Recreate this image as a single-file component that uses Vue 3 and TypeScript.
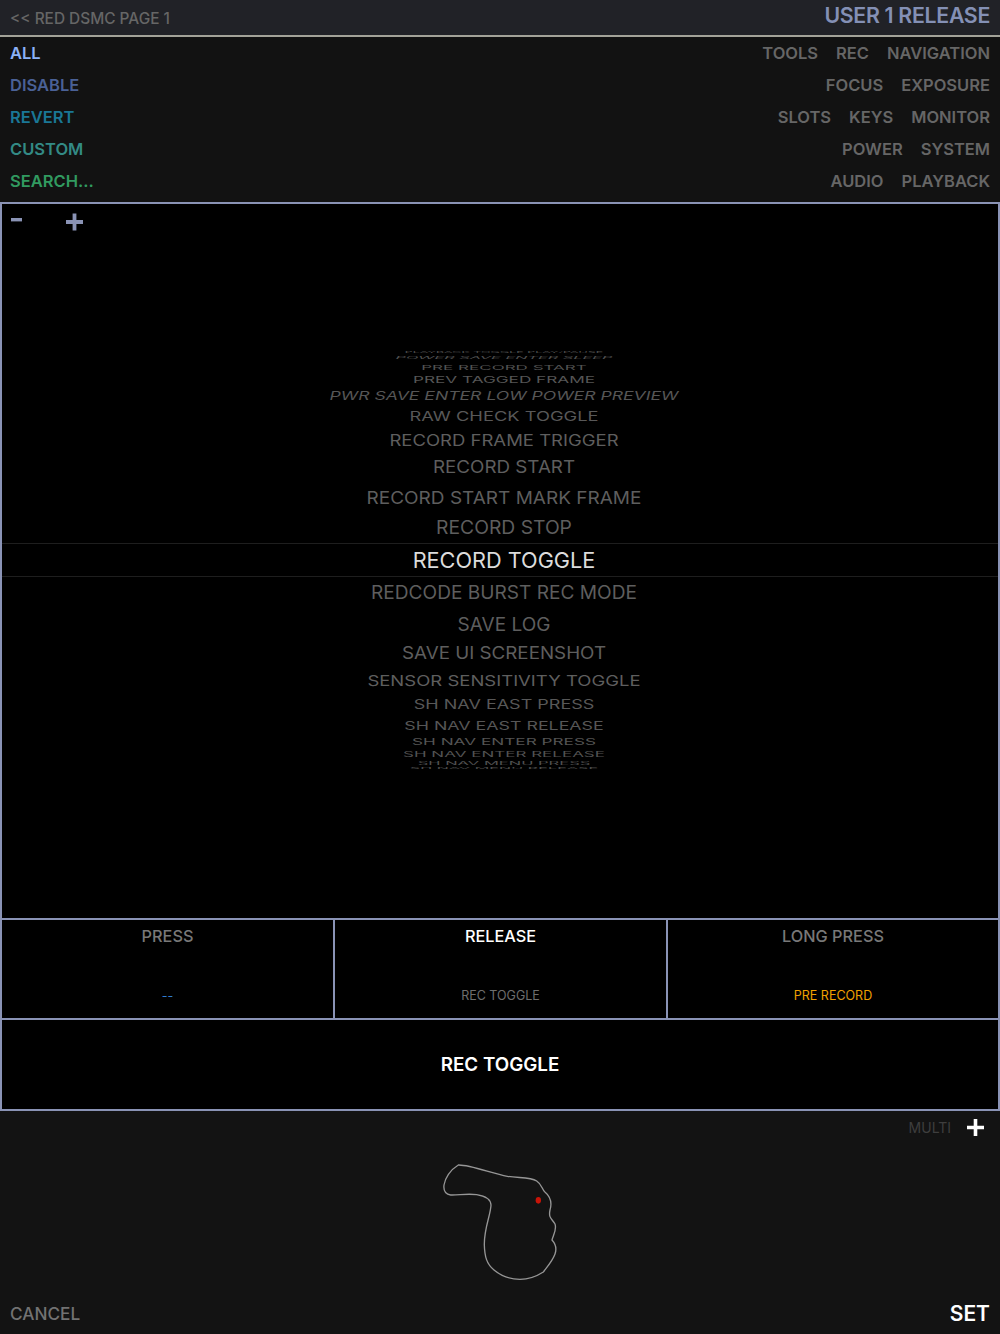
<script setup lang="ts">
interface WheelRow { text: string; h: number; sy: number; size: number; color: string; italic?: boolean; selected?: boolean }
const dim = '#5e5e5e'
const wheel: WheelRow[] = [
  { text: 'PLAYBACK TOGGLE PLAY/PAUSE', h: 5, sy: 0.14, size: 12.5, color: '#4c4c4c' },
  { text: 'POWER SAVE ENTER SLEEP', h: 6, sy: 0.2, size: 16.3, color: '#505050', italic: true },
  { text: 'PRE RECORD START', h: 12, sy: 0.4, size: 17, color: '#525252' },
  { text: 'PREV TAGGED FRAME', h: 14, sy: 0.52, size: 17.2, color: '#565656' },
  { text: 'PWR SAVE ENTER LOW POWER PREVIEW', h: 18, sy: 0.65, size: 17.6, color: '#565656', italic: true },
  { text: 'RAW CHECK TOGGLE', h: 22, sy: 0.72, size: 18.3, color: '#585858' },
  { text: 'RECORD FRAME TRIGGER', h: 27, sy: 0.83, size: 18.5, color: dim },
  { text: 'RECORD START', h: 28, sy: 0.9, size: 18.8, color: dim },
  { text: 'RECORD START MARK FRAME', h: 30, sy: 0.93, size: 19, color: dim },
  { text: 'RECORD STOP', h: 31, sy: 0.97, size: 19.3, color: dim },
  { text: 'RECORD TOGGLE', h: 34, sy: 1, size: 21.7, color: '#dcdcdc', selected: true },
  { text: 'REDCODE BURST REC MODE', h: 31, sy: 0.97, size: 19.1, color: dim },
  { text: 'SAVE LOG', h: 32, sy: 0.95, size: 19, color: dim },
  { text: 'SAVE UI SCREENSHOT', h: 28, sy: 0.9, size: 18.8, color: dim },
  { text: 'SENSOR SENSITIVITY TOGGLE', h: 25, sy: 0.8, size: 18.5, color: dim },
  { text: 'SH NAV EAST PRESS', h: 24, sy: 0.71, size: 18, color: '#585858' },
  { text: 'SH NAV EAST RELEASE', h: 17, sy: 0.62, size: 17.8, color: '#565656' },
  { text: 'SH NAV ENTER PRESS', h: 15, sy: 0.5, size: 17.2, color: '#545454' },
  { text: 'SH NAV ENTER RELEASE', h: 11, sy: 0.41, size: 17, color: '#525252' },
  { text: 'SH NAV MENU PRESS', h: 6, sy: 0.25, size: 16.5, color: '#505050' },
  { text: 'SH NAV MENU RELEASE', h: 4, sy: 0.14, size: 16.2, color: '#4c4c4c' },
]
const filters = [
  { label: 'ALL', color: '#8bb1f7', tags: ['TOOLS', 'REC', 'NAVIGATION'] },
  { label: 'DISABLE', color: '#4a6196', tags: ['FOCUS', 'EXPOSURE'] },
  { label: 'REVERT', color: '#1a7796', tags: ['SLOTS', 'KEYS', 'MONITOR'] },
  { label: 'CUSTOM', color: '#338a85', tags: ['POWER', 'SYSTEM'] },
  { label: 'SEARCH...', color: '#319a60', tags: ['AUDIO', 'PLAYBACK'] },
]
const cells = [
  { title: 'PRESS', value: '--', tcls: 'off', vcls: 'v-blue' },
  { title: 'RELEASE', value: 'REC TOGGLE', tcls: 'on', vcls: 'v-grey' },
  { title: 'LONG PRESS', value: 'PRE RECORD', tcls: 'off', vcls: 'v-orange' },
]
</script>

<template>
  <div class="page">
    <header class="head">
      <span class="back">&lt;&lt; RED DSMC PAGE 1</span>
      <span class="title">USER 1 RELEASE</span>
    </header>
    <section class="filters">
      <div v-for="f in filters" :key="f.label" class="frow">
        <span class="flabel" :style="{ color: f.color }">{{ f.label }}</span>
        <div class="tags"><span v-for="t in f.tags" :key="t">{{ t }}</span></div>
      </div>
    </section>
    <main class="box">
      <div class="picker">
        <div class="zoomers">
          <svg width="12" height="4" viewBox="0 0 12 4" class="minus"><rect width="11" height="3.4" y="0" fill="#8a93b5" /></svg>
          <svg width="18" height="18" viewBox="0 0 18 18" class="plus"><path d="M0 9h17M8.5 0.5v17" stroke="#8a93b5" stroke-width="3.8" fill="none" /></svg>
        </div>
        <div class="wheel">
          <div
            v-for="r in wheel"
            :key="r.text"
            class="wrow"
            :class="{ sel: r.selected }"
            :style="{ height: r.h + 'px' }"
          >
            <span
              class="wtext"
              :class="{ it: r.italic }"
              :style="{ fontSize: r.size + 'px', color: r.color, transform: `scaleY(${r.sy})` }"
            >{{ r.text }}</span>
          </div>
        </div>
      </div>
      <div class="cells">
        <div v-for="c in cells" :key="c.title" class="cell">
          <span class="ctitle" :class="c.tcls">{{ c.title }}</span>
          <span class="cvalue" :class="c.vcls">{{ c.value }}</span>
        </div>
      </div>
      <div class="result">REC TOGGLE</div>
    </main>
    <footer class="foot">
      <div class="multi">
        <span>MULTI</span>
        <svg width="17" height="17" viewBox="0 0 17 17"><path d="M0 8.5h17M8.5 0v17" stroke="#fff" stroke-width="3.6" fill="none" /></svg>
      </div>
      <svg class="grip" width="160" height="140" viewBox="0 0 480 420">
        <path
          d="M115 45 C150 44 215 70 262 79 C295 85 330 80 350 93 C366 103 366 118 374 125 C392 140 396 160 390 180 C385 205 395 205 405 222 C411 238 400 255 396 270 C405 280 411 295 405 312 C398 332 382 350 370 366 C345 382 325 388 300 388 C270 388 240 375 222 360 C200 342 194 320 193 285 C192 235 212 195 213 165 C212 145 195 138 170 134 C140 130 115 136 92 135 C76 133 70 122 72 105 C75 85 90 60 115 45 Z"
          fill="none" stroke="#969696" stroke-width="4"
        />
        <ellipse cx="355" cy="151" rx="8" ry="10" fill="#c81408" />
      </svg>
      <div class="actions">
        <span class="cancel">CANCEL</span>
        <span class="set">SET</span>
      </div>
    </footer>
  </div>
</template>

<style scoped>
.page { width: 1000px; height: 1334px; display: flex; flex-direction: column; background: #131313; font-family: Inter, "Liberation Sans", sans-serif; overflow: hidden; }
.head { height: 35px; box-sizing: content-box; background: #212227; border-bottom: 2px solid #a3a399; display: flex; justify-content: space-between; align-items: center; padding: 0 10px; }
.back { color: #666; font-size: 15.4px; font-weight: 500; padding-top: 1px; }
.title { color: #8490b5; font-size: 21.3px; font-weight: 600; letter-spacing: -0.3px; margin-top: -5px; }
.filters { height: 165px; padding: 0 10px; box-sizing: border-box; background: #121212; display: flex; flex-direction: column; }
.frow { height: 32px; display: flex; justify-content: space-between; align-items: center; flex: none; }
.flabel { font-size: 16.5px; font-weight: 600; }
.tags { display: flex; gap: 18px; color: #666; font-size: 16.5px; font-weight: 600; }
.box { height: 909px; box-sizing: border-box; border: 2px solid #8a93b5; background: #000; display: flex; flex-direction: column; }
.picker { height: 714px; flex: none; display: flex; flex-direction: column; }
.zoomers { height: 146px; flex: none; display: flex; align-items: flex-start; }
.minus { margin: 14px 0 0 9px; }
.plus { margin: 9px 0 0 43px; }
.wheel { display: flex; flex-direction: column; }
.wrow { flex: none; display: flex; align-items: center; justify-content: center; padding-left: 8px; box-sizing: border-box; }
.wrow.sel { border-top: 1px solid #1e1e1e; border-bottom: 1px solid #1e1e1e; padding-top: 1px; }
.wtext { display: block; white-space: nowrap; line-height: 1; font-weight: 400; }
.wtext.it { font-style: italic; }
.cells { height: 102px; flex: none; box-sizing: border-box; border-top: 2px solid #8a93b5; border-bottom: 2px solid #8a93b5; display: grid; grid-template-columns: 331px 333px 332px; }
.cell { display: flex; flex-direction: column; align-items: center; justify-content: space-between; padding: 6px 0 14px; border-left: 2px solid #8a93b5; }
.cell:first-child { border-left: 0; }
.ctitle { font-size: 16.3px; font-weight: 500; line-height: 20px; }
.ctitle.off { color: #787878; }
.ctitle.on { color: #fff; }
.cvalue { font-size: 12.5px; line-height: 16px; font-weight: 400; }
.v-blue { color: #2f7cd0; }
.v-grey { color: #6e6e6e; }
.v-orange { color: #f0a000; }
.result { flex: 1; display: flex; align-items: center; justify-content: center; color: #fff; font-size: 18.8px; font-weight: 600; }
.foot { flex: 1; background: #131313; display: flex; flex-direction: column; padding: 7px 10px 0; }
.multi { display: flex; justify-content: flex-end; align-items: center; gap: 16px; height: 18px; padding-right: 6px; color: #3e3e3e; font-size: 14px; }
.grip { align-self: center; margin-top: 14px; }
.actions { display: flex; justify-content: space-between; align-items: center; margin-top: 11px; }
.cancel { color: #727272; font-size: 17.2px; font-weight: 500; }
.set { color: #fff; font-size: 21px; font-weight: 600; }
</style>

<style>
html, body { margin: 0; background: #131313; }
</style>
